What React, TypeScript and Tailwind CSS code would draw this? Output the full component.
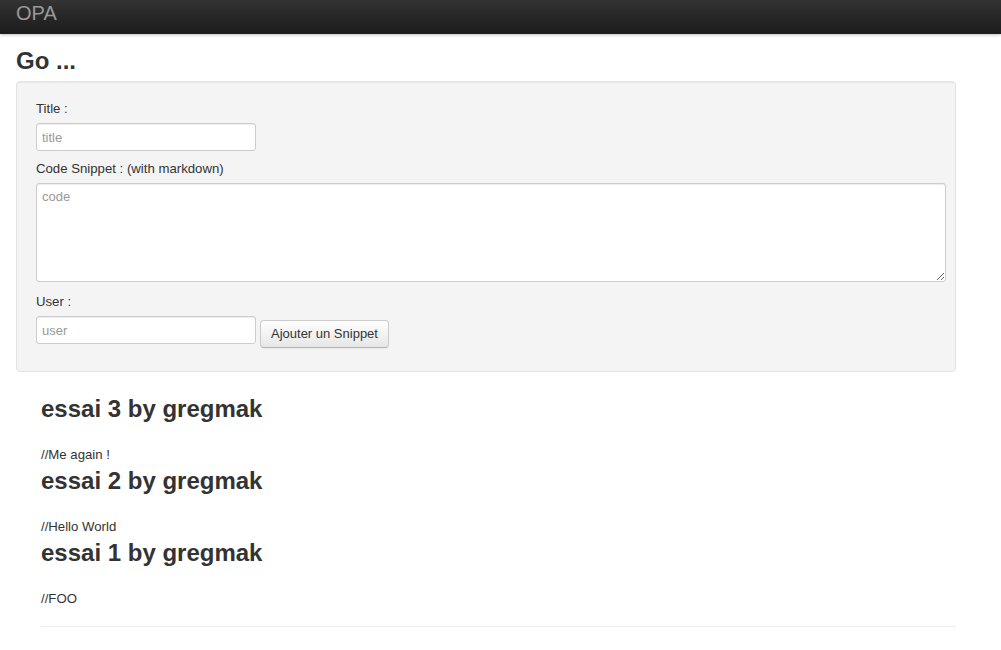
import React, { useState } from "react";

const posts = [
  { title: "essai 3", user: "gregmak", code: "//Me again !" },
  { title: "essai 2", user: "gregmak", code: "//Hello World" },
  { title: "essai 1", user: "gregmak", code: "//FOO" },
];

const inputCls =
  "block h-[28px] w-[220px] rounded-[3px] border border-[#cccccc] bg-white px-[5px] text-[13px] text-[#555] shadow-[inset_0_1px_1px_rgba(0,0,0,0.075)] outline-none placeholder:text-[#999]";

const App = () => {
  const [title, setTitle] = useState("");
  const [code, setCode] = useState("");
  const [user, setUser] = useState("");

  return (
    <div
      className="min-h-[650px] bg-white text-[#333]"
      style={{ fontFamily: '"Liberation Sans", Arial, sans-serif' }}
    >
      {/* navbar */}
      <div className="h-[34px] bg-gradient-to-b from-[#333333] to-[#1c1c1c] shadow-[0_1px_3px_rgba(0,0,0,0.25)]">
        <div className="px-4 pt-[3px] text-[20px] leading-[20px] text-[#999999]">
          OPA
        </div>
      </div>

      <div className="w-[972px] px-4">
        <h2 className="mt-[7px] text-[24px] font-bold leading-10 text-[#333]">
          Go ...
        </h2>

        <div className="rounded-[4px] border border-[#e3e3e3] bg-[#f4f4f4] px-[19px] pt-[18px] pb-[18px] shadow-[inset_0_1px_1px_rgba(0,0,0,0.05)]">
          <label className="mb-[5px] block text-[13.2px] leading-[18px]">
            Title :
          </label>
          <input
            type="text"
            placeholder="title"
            value={title}
            onChange={(e) => setTitle(e.target.value)}
            className={inputCls}
          />
          <label className="mt-[9px] mb-[5px] block text-[13.2px] leading-[18px]">
            Code Snippet : (with markdown)
          </label>
          <textarea
            placeholder="code"
            value={code}
            onChange={(e) => setCode(e.target.value)}
            className="block h-[99px] w-[910px] rounded-[3px] border border-[#cccccc] bg-white px-[5px] py-[4px] text-[13px] leading-[18px] text-[#555] shadow-[inset_0_1px_1px_rgba(0,0,0,0.075)] outline-none placeholder:text-[#999]"
          />
          <label className="mt-[11px] mb-[5px] block text-[13.2px] leading-[18px]">
            User :
          </label>
          <div className="flex items-start gap-[4px] pb-[5px]">
            <input
              type="text"
              placeholder="user"
              value={user}
              onChange={(e) => setUser(e.target.value)}
              className={inputCls}
            />
            <button className="mt-[4px] h-[28px] rounded-[4px] border border-[#cccccc] border-b-[#b3b3b3] bg-gradient-to-b from-white to-[#e6e6e6] px-[10px] text-[13px] text-[#333] shadow-[inset_0_1px_0_rgba(255,255,255,0.2),0_1px_2px_rgba(0,0,0,0.05)]">
              Ajouter un Snippet
            </button>
          </div>
        </div>

        <div className="mt-[22px] pl-[25px]">
          {posts.map((p) => (
            <div key={p.title} className="pb-[1px]">
              <h2 className="text-[24px] font-bold leading-[30px] text-[#333]">
                {p.title} by {p.user}
              </h2>
              <p className="mt-[21px] text-[13.2px] leading-5 text-[#333]">{p.code}</p>
            </div>
          ))}
          <hr className="mt-[16px] border-0 border-t border-[#eeeeee]" />
        </div>
      </div>
    </div>
  );
};

export default App;
